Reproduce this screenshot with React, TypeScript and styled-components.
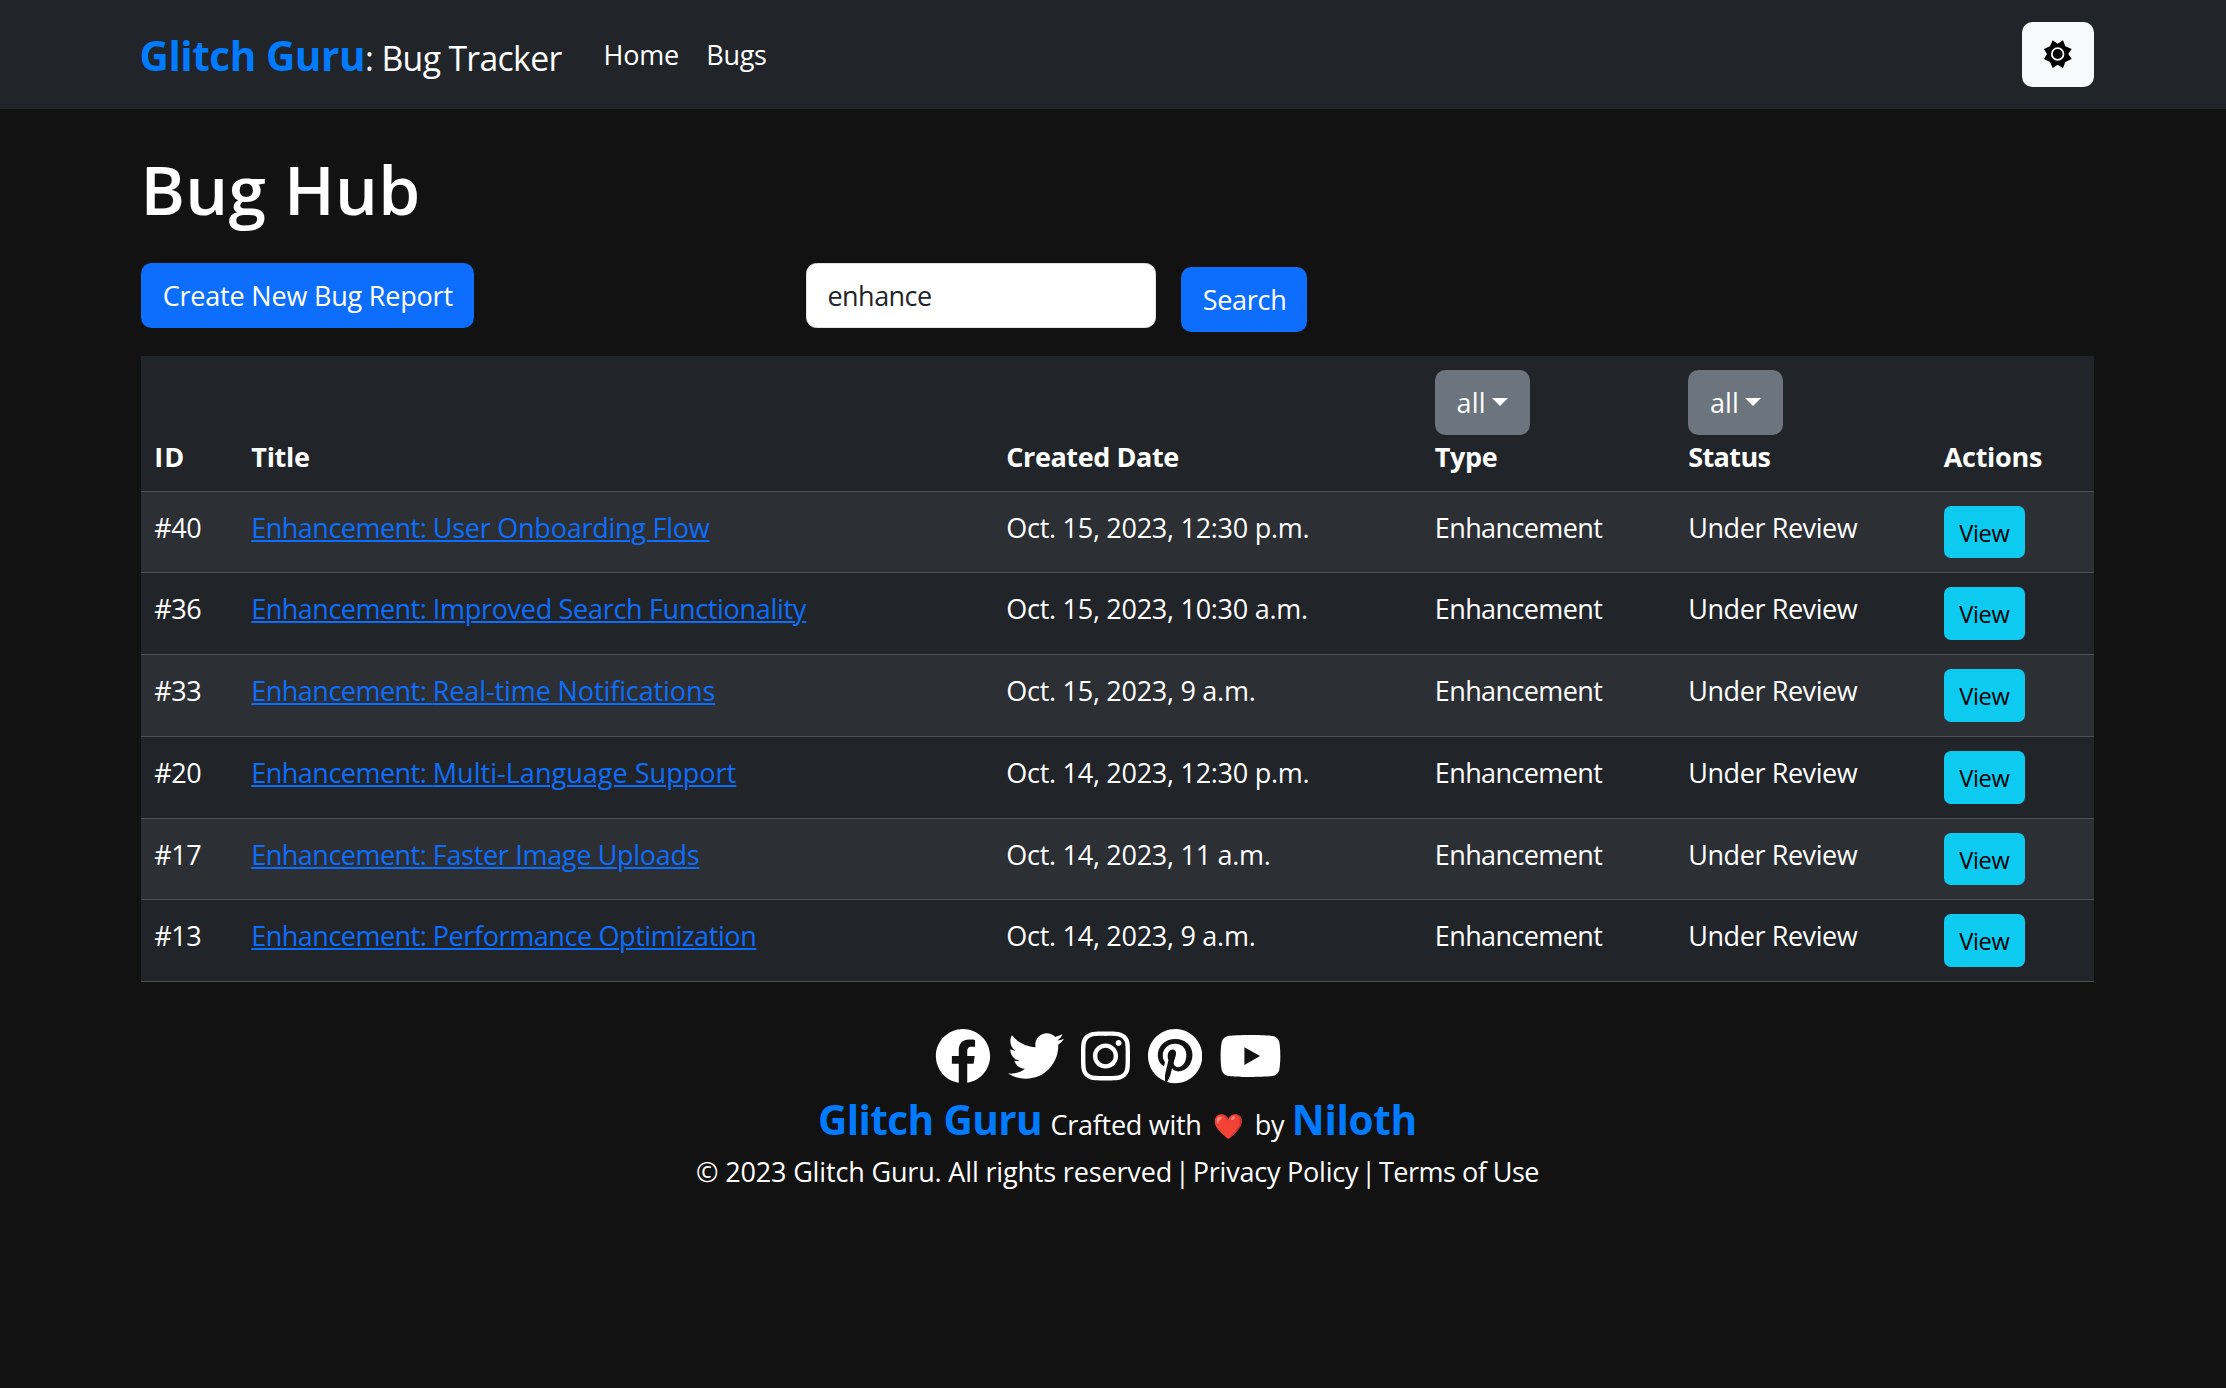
import React from "react";
import styled, { createGlobalStyle } from "styled-components";
import { FaFacebook, FaTwitter, FaInstagram, FaPinterest, FaYoutube } from "react-icons/fa";

const GlobalStyle = createGlobalStyle`
  *, *::before, *::after { box-sizing: border-box; }
  body {
    margin: 0;
    min-height: 100vh;
    background: #121212;
    color: #fff;
    font-family: "Open Sans", "Noto Sans", sans-serif;
    font-size: 27px;
    line-height: 42px;
  }
`;

const Track = styled.span<{ $ls: number }>`
  letter-spacing: ${({ $ls }) => $ls}px;
  white-space: nowrap;
`;

const Navbar = styled.nav`
  display: flex;
  align-items: flex-start;
  height: 109px;
  padding: 22px 132px 0 139.5px;
  background: #212529;
`;

const Brand = styled.a`
  width: 464px;
  padding-top: 2px;
  font-size: 33.75px;
  line-height: 63px;
  letter-spacing: -0.65px;
  white-space: nowrap;
`;

const BrandName = styled.span<{ $ls?: number }>`
  color: #007bff;
  font-size: 40.5px;
  font-weight: 700;
  line-height: 63px;
  letter-spacing: ${({ $ls }) => $ls ?? -0.45}px;
`;

const NavLinks = styled.div`
  display: flex;
  gap: 27.5px;
  padding-top: 12px;
`;

const ThemeButton = styled.button`
  display: flex;
  align-items: center;
  justify-content: center;
  width: 72px;
  height: 65px;
  margin-left: auto;
  padding: 0;
  border: 0;
  border-radius: 10.5px;
  background: #f8f9fa;
`;

const Container = styled.main`
  padding: 38px 132px 0 141px;
`;

const Heading = styled.h1`
  margin: 0 0 32px -0.5px;
  font-size: 67.5px;
  font-weight: 600;
  line-height: 84px;
  letter-spacing: 0.3px;
`;

const Toolbar = styled.div`
  display: grid;
  grid-template-columns: 665px 375px auto;
  align-items: start;
  justify-content: start;
  height: 93px;
`;

const Button = styled.button<{ $tone?: string; $width: number; $drop?: number }>`
  display: flex;
  align-items: center;
  width: ${({ $width }) => $width}px;
  height: 65px;
  margin: ${({ $drop }) => $drop ?? 0}px 0 0;
  padding: 0 21px 0 21.7px;
  border: 0;
  border-radius: 10.5px;
  background: ${({ $tone }) => $tone ?? "#0d6efd"};
  color: #fff;
  font: inherit;
`;

const SearchInput = styled.input`
  width: 350px;
  height: 65px;
  padding: 0 20.5px;
  border: 1px solid #dee2e6;
  border-radius: 10.5px;
  background: #fff;
  color: #212529;
  font: inherit;
  letter-spacing: -0.55px;
  outline: none;
`;

const Table = styled.table`
  width: 1953px;
  table-layout: fixed;
  border-collapse: separate;
  border-spacing: 0;
  background: #212529;
`;

const Col = styled.col<{ $w: number }>`
  width: ${({ $w }) => $w}px;
`;

const HeadCell = styled.th`
  height: 136px;
  padding: 14px 14px 12px;
  vertical-align: bottom;
  text-align: left;
  font-weight: 700;
  line-height: 44px;
  border-bottom: 1px solid #4d5154;

  &:first-child { padding-left: 13.2px; }
`;

const FilterButton = styled(Button)`
  font-weight: 400;
  gap: 6px;
  white-space: nowrap;
`;

const Caret = styled.i`
  margin-top: -2px;
  border-top: 8px solid #fff;
  border-left: 8px solid transparent;
  border-right: 8px solid transparent;
`;

const Cell = styled.td`
  height: 82px;
  padding: 14px 14px 13px;
  vertical-align: top;
  line-height: 44px;
  border-bottom: 1px solid #4d5154;

  &:first-child { padding-left: 13.2px; }
`;

const ViewButton = styled.a`
  display: flex;
  align-items: center;
  justify-content: center;
  width: 81px;
  height: 53px;
  padding-top: 1px;
  border-radius: 7px;
  background: #0dcaf0;
  color: #000;
  font-size: 23.625px;
  letter-spacing: -0.36px;
`;

const Row = styled.tr`
  &:nth-child(odd) { background: #2c3034; }
  &:nth-child(4n + 1) ${Cell} { height: 81px; }
  &:nth-child(4n + 1) ${ViewButton} { height: 52px; }
`;

const BugLink = styled.a`
  color: #0d6efd;
  text-decoration: underline;
  text-decoration-thickness: 2px;
  text-underline-offset: 2px;
`;

const Footer = styled.footer`
  display: flex;
  flex-direction: column;
  align-items: center;
  padding: 46px 132px 0 141px;
`;

const Socials = styled.div`
  display: flex;
  gap: 17.4px;
  height: 56px;
  padding-right: 18px;
`;

const SocialLink = styled.a<{ $w: number }>`
  display: block;
  width: ${({ $w }) => $w}px;
  height: 56px;

  svg {
    display: block;
    width: 100%;
    height: 100%;
  }
`;

const Credit = styled.div`
  display: flex;
  align-items: baseline;
  height: 63px;
  line-height: 63px;
  margin-top: 4px;
`;

const CreditText = styled.span`
  margin: 0 7.5px 0 8.5px;
  letter-spacing: -0.28px;
`;

const Heart = styled.span`
  margin: 0 11px 0 11.5px;
  font-size: 24.5px;
`;

const Legal = styled.div`
  white-space: nowrap;
`;

const Pipe = styled.span`
  margin: 0 -4.1px;
`;

const SunIcon = () => (
  <svg width="42" height="42" viewBox="0 0 126 126">
    <path
      d="M47 19L62 29L78 19L85 37L104 45L94 60L104 75L85 84L78 102L62 92L47 102L39 84L21 75L30 60L21 45L39 37Z"
      fill="#000"
    />
    <circle cx="62" cy="60" r="17.5" fill="none" stroke="#f8f9fa" strokeWidth="5.5" />
  </svg>
);

type Bug = { id: number; title: string; ls: number; date: string };

const bugs: Bug[] = [
  { id: 40, title: "User Onboarding Flow", ls: -0.245, date: "Oct. 15, 2023, 12:30 p.m." },
  { id: 36, title: "Improved Search Functionality", ls: -0.3, date: "Oct. 15, 2023, 10:30 a.m." },
  { id: 33, title: "Real-time Notifications", ls: -0.11, date: "Oct. 15, 2023, 9 a.m." },
  { id: 20, title: "Multi-Language Support", ls: 0.03, date: "Oct. 14, 2023, 12:30 p.m." },
  { id: 17, title: "Faster Image Uploads", ls: -0.31, date: "Oct. 14, 2023, 11 a.m." },
  { id: 13, title: "Performance Optimization", ls: -0.4, date: "Oct. 14, 2023, 9 a.m." },
];

const columns = [
  { label: "ID", ls: 1, width: 96.3, filter: false },
  { label: "Title", ls: -0.3, width: 755, filter: false },
  { label: "Created Date", ls: -0.42, width: 428.5, filter: false },
  { label: "Type", ls: -0.35, width: 253.4, filter: true },
  { label: "Status", ls: -0.6, width: 255.6, filter: true },
  { label: "Actions", ls: -0.3, width: 164.2, filter: false },
];

const socials = [
  { name: "Facebook", Icon: FaFacebook, width: 56 },
  { name: "Twitter", Icon: FaTwitter, width: 56 },
  { name: "Instagram", Icon: FaInstagram, width: 49 },
  { name: "Pinterest", Icon: FaPinterest, width: 54.25 },
  { name: "YouTube", Icon: FaYoutube, width: 63 },
];

export default function App() {
  return (
    <>
      <GlobalStyle />
      <Navbar>
        <Brand>
          <BrandName>Glitch Guru</BrandName>: Bug Tracker
        </Brand>
        <NavLinks>
          <Track $ls={-0.25}>Home</Track>
          <Track $ls={-0.3}>Bugs</Track>
        </NavLinks>
        <ThemeButton aria-label="Toggle theme">
          <SunIcon />
        </ThemeButton>
      </Navbar>
      <Container>
        <Heading>Bug Hub</Heading>
        <Toolbar>
          <Button $width={333}>
            <Track $ls={-0.2}>Create New Bug Report</Track>
          </Button>
          <SearchInput defaultValue="enhance" />
          <Button $width={126} $drop={4}>
            <Track $ls={-0.27}>Search</Track>
          </Button>
        </Toolbar>
        <Table>
          <colgroup>
            {columns.map((c) => (
              <Col key={c.label} $w={c.width} />
            ))}
          </colgroup>
          <thead>
            <tr>
              {columns.map((c) => (
                <HeadCell key={c.label}>
                  {c.filter && (
                    <FilterButton $tone="#6c757d" $width={95}>
                      <Track $ls={0.2}>all</Track>
                      <Caret />
                    </FilterButton>
                  )}
                  <Track $ls={c.ls}>{c.label}</Track>
                </HeadCell>
              ))}
            </tr>
          </thead>
          <tbody>
            {bugs.map((b) => (
              <Row key={b.id}>
                <Cell>
                  <Track $ls={-0.4}>#{b.id}</Track>
                </Cell>
                <Cell>
                  <BugLink>
                    <Track $ls={-0.52}>Enhancement: </Track>
                    <Track $ls={b.ls}>{b.title}</Track>
                  </BugLink>
                </Cell>
                <Cell>
                  <Track $ls={-0.275}>{b.date}</Track>
                </Cell>
                <Cell>
                  <Track $ls={-0.6}>Enhancement</Track>
                </Cell>
                <Cell>
                  <Track $ls={-0.42}>Under Review</Track>
                </Cell>
                <Cell>
                  <ViewButton>View</ViewButton>
                </Cell>
              </Row>
            ))}
          </tbody>
        </Table>
      </Container>
      <Footer>
        <Socials>
          {socials.map(({ name, Icon, width }) => (
            <SocialLink key={name} $w={width} aria-label={name}>
              <Icon />
            </SocialLink>
          ))}
        </Socials>
        <Credit>
          <BrandName $ls={-0.6}>Glitch Guru</BrandName>
          <CreditText>
            Crafted with<Heart>❤️</Heart>by
          </CreditText>
          <BrandName $ls={-0.3}>Niloth</BrandName>
        </Credit>
        <Legal>
          <Track $ls={-0.16}>© 2023 Glitch Guru. All rights reserved</Track> <Pipe>|</Pipe>{" "}
          <Track $ls={-0.22}>Privacy Policy</Track> <Pipe>|</Pipe> <Track $ls={-0.5}>Terms of Use</Track>
        </Legal>
      </Footer>
    </>
  );
}
